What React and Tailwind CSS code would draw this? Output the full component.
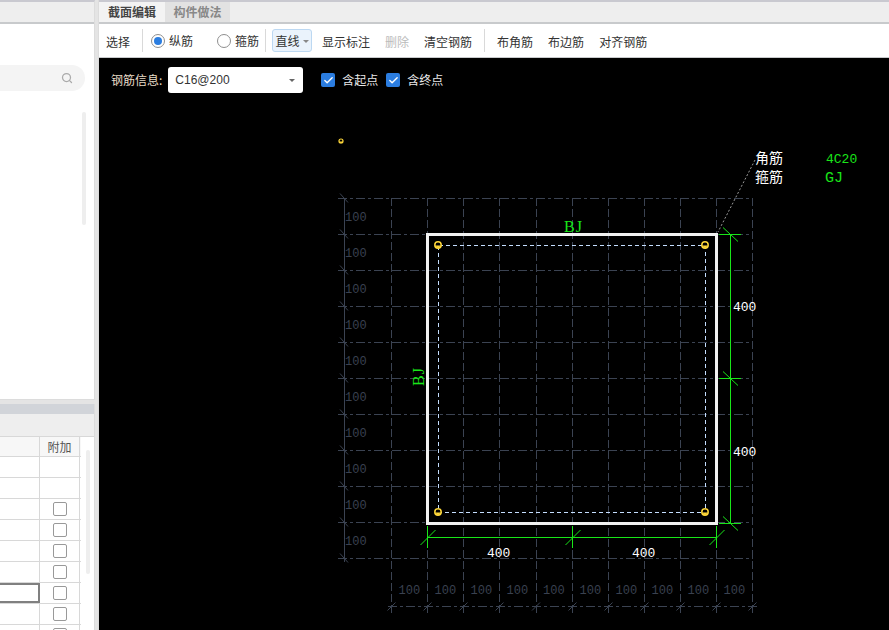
import React from "react";
import { Search, Check } from "lucide-react";

const font = { cjk: "font-['Microsoft_YaHei','Noto_Sans_CJK_SC','Liberation_Sans',sans-serif]" };
const MONO = "'Liberation Mono','Noto Sans CJK SC',monospace";
const SERIF = "'Liberation Serif',serif";

const gridX = [391.5, 427.5, 463.5, 499.5, 536, 572.5, 608.5, 644.5, 680.5, 716.5, 752.5];
const gridY = [198.5, 234.5, 270.5, 306.5, 342.5, 378.5, 414.5, 450.5, 486.5, 522.5, 558.5];
const GRID = "#3b4352";
const GREEN = "#19e619";

function Section() {
  return (
    <g shapeRendering="crispEdges">
      {/* grid */}
      {gridY.map((y) => (
        <line key={y} x1="338" x2="753" y1={y} y2={y} stroke={GRID} strokeDasharray="9 3 3 3" />
      ))}
      {gridX.map((x) => (
        <line key={x} x1={x} x2={x} y1="198" y2="613" stroke={GRID} strokeDasharray="8 3" />
      ))}
      <line x1="344.5" x2="344.5" y1="198" y2="562" stroke={GRID} />
      <line x1="388" x2="757" y1="606.5" y2="606.5" stroke={GRID} strokeDasharray="9 3 3 3" />
      {gridY.map((y) => (
        <line key={y} x1="340" x2="348" y1={y - 5} y2={y + 4} stroke={GRID} shapeRendering="auto" />
      ))}
      {gridX.map((x) => (
        <line key={x} x1={x - 4} x2={x + 4} y1="610.5" y2="602.5" stroke={GRID} shapeRendering="auto" />
      ))}
      {gridY.slice(0, 10).map((y) => (
        <text key={y} x="345" y={y + 22} fontFamily={MONO} fontSize="12" fill="#3a4150">100</text>
      ))}
      {gridX.slice(0, 10).map((x) => (
        <text key={x} x={x + 7} y="594" fontFamily={MONO} fontSize="12" fill="#3a4150">100</text>
      ))}

      {/* section outline + stirrup */}
      <rect x="427.5" y="234.5" width="289" height="288.5" fill="none" stroke="#f2f2f2" strokeWidth="3" />
      <rect x="438.5" y="245.5" width="267" height="267" fill="none" stroke="#c4deff" strokeDasharray="4 3" />
      {[[438, 245], [705, 245], [438, 512], [705, 512]].map(([x, y]) => (
        <g key={x + "-" + y} shapeRendering="auto">
          <circle cx={x} cy={y} r="3.2" fill="#000" stroke="#ffd83a" strokeWidth="1.5" />
          <path d={`M${x - 3} ${y + 0.5}h6l-3 3z`} fill="#ffd83a" />
        </g>
      ))}
      <g shapeRendering="auto">
        <circle cx="341" cy="141" r="2" fill="#000" stroke="#ffd83a" strokeWidth="1.2" />
        <path d="M339 141.5h4l-2 2z" fill="#ffd83a" />
      </g>

      {/* green dimensions */}
      <line x1="730.5" x2="730.5" y1="234" y2="523" stroke={GREEN} />
      {[234.5, 378.5, 523.5].map((y) => (
        <g key={y}>
          <line x1="719" x2="741" y1={y} y2={y} stroke={GREEN} />
          <line x1="723" x2="738" y1={y - 7} y2={y + 7} stroke={GREEN} shapeRendering="auto" />
        </g>
      ))}
      <line x1="427" x2="717" y1="537.5" y2="537.5" stroke={GREEN} />
      {[427.5, 572.5, 716.5].map((x) => (
        <g key={x}>
          <line x1={x} x2={x} y1="526" y2="548" stroke={GREEN} />
          <line x1={x - 7} x2={x + 8} y1="545" y2="530" stroke={GREEN} shapeRendering="auto" />
        </g>
      ))}

      {/* leader */}
      <line x1="755" y1="160" x2="718" y2="232" stroke="#9a9a9a" strokeDasharray="2 2" shapeRendering="auto" />

      {/* labels */}
      <g fontFamily={MONO} fontSize="13" fill="#fff">
        <text x="487" y="557">400</text>
        <text x="632" y="557">400</text>
        <text x="733" y="311">400</text>
        <text x="733" y="456">400</text>
      </g>
      <g fontFamily={SERIF} fontSize="16" fill={GREEN}>
        <text x="564" y="232" letterSpacing="1">BJ</text>
        <text x="0" y="0" transform="translate(424 386) rotate(-90)" letterSpacing="1">BJ</text>
      </g>
      <g fontFamily={MONO} fill={GREEN}>
        <text x="826" y="163" fontSize="13">4C20</text>
        <text x="825" y="182" fontSize="15">GJ</text>
      </g>
      <g fontFamily={MONO} fontSize="14" fill="#fff">
        <text x="755" y="163">角筋</text>
        <text x="755" y="182">箍筋</text>
      </g>
    </g>
  );
}

function Radio({ checked, children, className }) {
  return (
    <div className={`flex items-center gap-[4px] ${className}`}>
      <span className="flex h-[14px] w-[14px] items-center justify-center rounded-full border border-[#8f8f8f] bg-white">
        {checked && <span className="h-[8px] w-[8px] rounded-full bg-[#2b7de0]" />}
      </span>
      <span>{children}</span>
    </div>
  );
}

function Divider({ className }) {
  return <div className={`h-[23px] w-px bg-[#d9d9d9] ${className}`} />;
}

function Tick({ children, className }) {
  return (
    <div className={`flex items-center gap-[7px] ${className}`}>
      <span className="flex h-[14px] w-[14px] items-center justify-center rounded-[2px] bg-[#2b7de0]">
        <Check size={11} strokeWidth={3} color="#fff" />
      </span>
      <span className="text-[#e8e8e8]">{children}</span>
    </div>
  );
}

export default function App() {
  const rows = [0, 1, 2, 3, 4, 5, 6, 7, 8];
  return (
    <div className={`flex h-[630px] w-[889px] overflow-hidden bg-[#e4e4e4] text-[12px] text-[#333] ${font.cjk}`}>
      {/* left column */}
      <div className="flex w-[98px] shrink-0 flex-col">
        <div className="flex h-[400px] w-[95px] flex-col border-t-2 border-r border-b border-t-[#c9c9d0] border-r-[#dcdcdc] border-b-[#dcdcdc] bg-white">
          <div className="h-[22px] shrink-0 border-b-2 border-[#c8cacc] bg-[#eeeeee]" />
          <div className="mt-[41px] flex h-[26px] w-[85px] items-center justify-end rounded-r-[13px] bg-[#f4f4f4] pr-[12px]">
            <Search size={12} color="#aaa" strokeWidth={2.5} />
          </div>
          <div className="mt-[21px] ml-[82px] h-[113px] w-[4px] rounded bg-[#eeeeee]" />
        </div>
        <div className="mt-[4px] flex min-h-0 w-[95px] flex-1 flex-col border-r border-[#dcdcdc] bg-white">
          <div className="h-[10px] shrink-0 bg-[#d1d4d9]" />
          <div className="h-[23px] shrink-0 border-b border-[#d8d8d8] bg-[#eeeeee]" />
          <div className="relative flex min-h-0 flex-1 overflow-hidden">
            <div className="w-[81px] shrink-0">
              <div className="flex h-[20px] border-b border-[#d8d8d8] bg-[#f7f7f7]">
                <div className="w-[40px] border-r border-[#d8d8d8]" />
                <div className="flex w-[40px] items-center justify-center border-r border-[#d8d8d8] text-[#555]">附加</div>
              </div>
              {rows.map((r) => (
                <div key={r} className="flex h-[21px] border-b border-[#d8d8d8]">
                  <div className={`w-[40px] border-r border-[#d8d8d8] ${r === 6 ? "border-y-2 border-r-2 border-y-[#808080] border-r-[#808080]" : ""}`} />
                  <div className="flex w-[40px] items-center justify-center border-r border-[#d8d8d8]">
                    {r > 1 && <span className="h-[14px] w-[14px] rounded-[2px] border border-[#999] bg-white" />}
                  </div>
                </div>
              ))}
            </div>
            <div className="mt-[13px] ml-[5px] h-[124px] w-[4px] rounded bg-[#eeeeee]" />
          </div>
        </div>
      </div>

      {/* right column */}
      <div className="flex min-w-0 flex-1 flex-col border-l border-[#dcdcdc]">
        <div className="flex h-[24px] shrink-0 border-t-2 border-b-2 border-t-[#c9c9d0] border-b-[#c8cacc] bg-[#eeeeee] font-bold">
          <div className="flex w-[66px] items-center justify-center bg-[#f3f3f3] text-[#444]">截面编辑</div>
          <div className="flex w-[65px] items-center justify-center bg-[#e2e2e2] text-[#888]">构件做法</div>
        </div>
        <div className="flex h-[33px] shrink-0 items-center bg-white pl-[7px]">
          <span className="pt-[3px]">选择</span>
          <Divider className="ml-[12px]" />
          <Radio checked className="ml-[8px]">纵筋</Radio>
          <Radio className="ml-[24px]">箍筋</Radio>
          <Divider className="ml-[6px]" />
          <div className="ml-[6px] flex h-[23px] w-[40px] items-center justify-center gap-[3px] rounded-[3px] border border-[#bcd8f2] bg-[#eaf3fc] pt-[1px]">
            <span>直线</span>
            <span className="mt-[1px] h-0 w-0 border-x-[3px] border-t-[3px] border-x-transparent border-t-[#888]" />
          </div>
          <span className="ml-[10px] pt-[3px]">显示标注</span>
          <span className="ml-[15px] pt-[3px] text-[#bbb]">删除</span>
          <span className="ml-[15px] pt-[3px]">清空钢筋</span>
          <Divider className="ml-[12px]" />
          <span className="ml-[12px] pt-[3px]">布角筋</span>
          <span className="ml-[15px] pt-[3px]">布边筋</span>
          <span className="ml-[15px] pt-[3px]">对齐钢筋</span>
        </div>
        <div className="relative min-h-0 flex-1 border-t border-[#c8cacc] bg-black">
          <svg className="absolute inset-0 h-full w-full" viewBox="99 58 790 572">
            <Section />
          </svg>
          <div className="relative flex items-center pt-[9px] pl-[12px]">
            <span className="text-[#e8dcc8]">钢筋信息:</span>
            <div className="ml-[6px] flex h-[26px] w-[135px] items-center justify-between rounded-[3px] bg-white pr-[8px] pl-[7px] font-['Liberation_Sans',sans-serif]">
              <span>C16@200</span>
              <span className="h-0 w-0 border-x-[3px] border-t-[3px] border-x-transparent border-t-[#666]" />
            </div>
            <Tick className="ml-[18px]">含起点</Tick>
            <Tick className="ml-[8px]">含终点</Tick>
          </div>
        </div>
      </div>
    </div>
  );
}
